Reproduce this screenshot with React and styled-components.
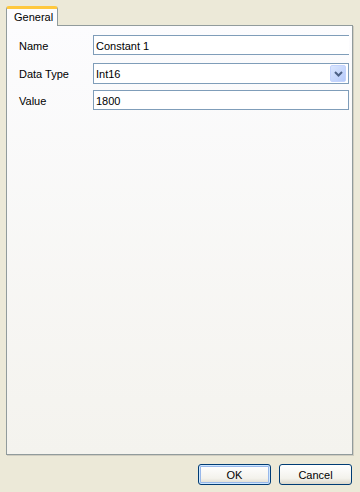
import React from 'react';
import styled, { createGlobalStyle } from 'styled-components';

const GlobalStyle = createGlobalStyle`
  html, body {
    margin: 0;
    padding: 0;
    background: #ece9d8;
  }
  * {
    box-sizing: border-box;
  }
`;

const Window = styled.div`
  width: 360px;
  height: 492px;
  background: #ece9d8;
  padding: 6px 7px 0 6px;
  display: flex;
  flex-direction: column;
  font-family: Tahoma, 'Liberation Sans', Arial, sans-serif;
  font-size: 11px;
  color: #000;
`;

const TabStrip = styled.div`
  display: flex;
  height: 20px;
  position: relative;
  z-index: 1;
`;

const Tab = styled.div`
  width: 52px;
  height: 20px;
  background: #fcfcfe;
  border: 1px solid #919b9c;
  border-top: 3px solid #ffc83c;
  border-bottom: none;
  border-radius: 3px 3px 0 0;
  padding: 2px 0 0 7px;
  line-height: 13px;
`;

const Panel = styled.div`
  flex: 1;
  margin-top: -1px;
  border: 1px solid #919b9c;
  background: linear-gradient(#fcfcfe, #f4f3ee);
  padding: 9px 3px 0 12px;
  display: flex;
  flex-direction: column;
  box-shadow: 1px 1px 0 #d0cdc0;
`;

const Row = styled.div`
  display: grid;
  grid-template-columns: 74px 1fr;
  align-items: center;
  height: ${({ $h }) => $h || 20}px;
  margin-top: ${({ $gap }) => $gap || 0}px;
`;

const Label = styled.span`
  padding-top: 1px;
`;

const Field = styled.div`
  height: 100%;
  border: 1px solid #7f9db9;
  border-right: ${({ $open }) => ($open ? 'none' : '1px solid #7f9db9')};
  background: #fff;
  display: flex;
  align-items: center;
  padding: 1px 2px 0 2px;
  position: relative;
`;

const DropButton = styled.div`
  position: absolute;
  right: 2px;
  top: 1px;
  width: 16px;
  height: 17px;
  border-radius: 2px;
  background: linear-gradient(135deg, #dae6fe, #b6cafa);
  border: 1px solid #c3d3fd;
  display: flex;
  align-items: center;
  justify-content: center;
`;

const Footer = styled.div`
  height: 37px;
  display: flex;
  justify-content: flex-end;
  align-items: flex-start;
  gap: 8px;
  padding-top: 9px;
  padding-right: 1px;
`;

const Button = styled.button`
  width: 73px;
  height: 21px;
  font-family: inherit;
  font-size: 11px;
  color: #000;
  border: 1px solid #003c74;
  border-radius: 3px;
  background: linear-gradient(#ffffff, #f3f2ec 70%, #dcd8cb);
  padding: 0;
  box-shadow: ${({ $default }) =>
    $default ? 'inset 0 0 0 1px #cee7ff, inset 0 0 0 2px #98b8ea' : 'none'};
`;

const Chevron = () => (
  <svg width="9" height="6" viewBox="0 0 9 6">
    <path d="M1 1 L4.5 4.5 L8 1" fill="none" stroke="#4d6185" strokeWidth="2" />
  </svg>
);

export default function App() {
  return (
    <>
      <GlobalStyle />
      <Window>
        <TabStrip>
          <Tab>General</Tab>
        </TabStrip>
        <Panel>
          <Row>
            <Label>Name</Label>
            <Field $open>Constant 1</Field>
          </Row>
          <Row $h={21} $gap={8}>
            <Label>Data Type</Label>
            <Field>
              Int16
              <DropButton>
                <Chevron />
              </DropButton>
            </Field>
          </Row>
          <Row $gap={6}>
            <Label>Value</Label>
            <Field>1800</Field>
          </Row>
        </Panel>
        <Footer>
          <Button $default>OK</Button>
          <Button>Cancel</Button>
        </Footer>
      </Window>
    </>
  );
}
